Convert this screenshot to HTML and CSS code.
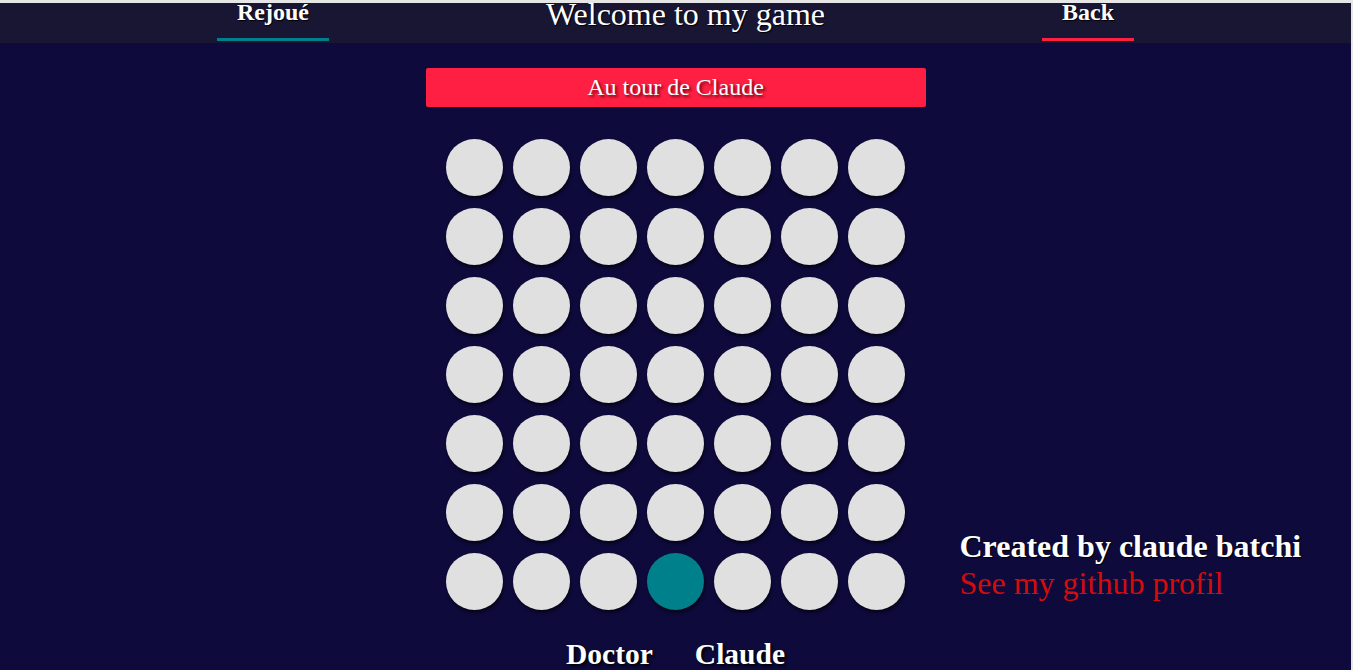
FILE: index.html
```html
<!DOCTYPE html>
<html lang="fr">
<head>
<meta charset="utf-8">
<title>Puissance 4</title>
<link rel="stylesheet" href="styles.css">
</head>
<body>
<div class="page">
  <header class="topbar">
    <a class="nav-item nav-replay">Rejoué</a>
    <h1 class="title">Welcome to my game</h1>
    <a class="nav-item nav-back">Back</a>
  </header>
  <main class="main">
    <div class="turn">Au tour de Claude</div>
    <div class="board-row">
      <div class="spacer"></div>
      <div class="board">
        <span class="cell"></span><span class="cell"></span><span class="cell"></span><span class="cell"></span><span class="cell"></span><span class="cell"></span><span class="cell"></span>
        <span class="cell"></span><span class="cell"></span><span class="cell"></span><span class="cell"></span><span class="cell"></span><span class="cell"></span><span class="cell"></span>
        <span class="cell"></span><span class="cell"></span><span class="cell"></span><span class="cell"></span><span class="cell"></span><span class="cell"></span><span class="cell"></span>
        <span class="cell"></span><span class="cell"></span><span class="cell"></span><span class="cell"></span><span class="cell"></span><span class="cell"></span><span class="cell"></span>
        <span class="cell"></span><span class="cell"></span><span class="cell"></span><span class="cell"></span><span class="cell"></span><span class="cell"></span><span class="cell"></span>
        <span class="cell"></span><span class="cell"></span><span class="cell"></span><span class="cell"></span><span class="cell"></span><span class="cell"></span><span class="cell"></span>
        <span class="cell"></span><span class="cell"></span><span class="cell"></span><span class="cell teal"></span><span class="cell"></span><span class="cell"></span><span class="cell"></span>
      </div>
      <aside class="credits">
        <div class="credit-name">Created by claude batchi</div>
        <a class="credit-link">See my github profil</a>
      </aside>
    </div>
    <div class="players">
      <span class="player">Doctor</span>
      <span class="player">Claude</span>
    </div>
  </main>
</div>
</body>
</html>
```
FILE: styles.css
```css
html, body {
  margin: 0;
  padding: 0;
}
body {
  background: #e6e6e6;
  height: 670px;
  overflow: hidden;
  font-family: "Liberation Serif", "Times New Roman", serif;
  color: #fff;
}
.page {
  margin-top: 3px;
  margin-right: 2px;
  background: #0e0a3c;
  min-height: 700px;
}
.topbar {
  height: 40px;
  background: #191633;
  display: flex;
  justify-content: space-evenly;
  align-items: flex-start;
}
.nav-item {
  font-size: 24px;
  font-weight: bold;
  line-height: 18px;
  padding: 0 20px 17px;
  border-bottom: 3px solid transparent;
  text-shadow: 1px 1px 1px #000;
  cursor: pointer;
}
.nav-replay { border-bottom-color: #00808a; }
.nav-back { border-bottom-color: #ff1f43; }
.title {
  margin: 0;
  font-size: 32px;
  font-weight: normal;
  line-height: 22px;
  text-shadow: 1px 1px 1px #000;
}
.main {
  display: flex;
  flex-direction: column;
  align-items: center;
  padding-top: 25px;
}
.turn {
  width: 500px;
  height: 39px;
  line-height: 39px;
  background: #ff1f43;
  border-radius: 2px;
  text-align: center;
  font-size: 24px;
  text-shadow: 2px 2px 3px #6a0010;
}
.board-row {
  align-self: stretch;
  display: grid;
  grid-template-columns: 1fr 500px 1fr;
  margin-top: 32px;
}
.board {
  grid-column: 2;
  justify-self: center;
  display: grid;
  grid-template-columns: repeat(7, 57px);
  column-gap: 10px;
  row-gap: 12px;
}
.cell {
  width: 57px;
  height: 57px;
  border-radius: 50%;
  background: #e0e0e0;
  box-shadow: 1px 3px 3px rgba(0, 0, 0, 0.55);
}
.cell.teal { background: #00808a; }
.credits {
  align-self: end;
  margin-bottom: 8px;
  padding-left: 34px;
  display: flex;
  flex-direction: column;
  font-size: 32px;
}
.credit-name {
  font-weight: bold;
  text-shadow: 1px 1px 1px #000;
}
.credit-link {
  color: #d40c0c;
  cursor: pointer;
}
.players {
  margin-top: 28px;
  display: flex;
  gap: 42px;
  font-size: 29.5px;
  font-weight: bold;
}
.player {
  text-shadow: 2px 2px 3px #000;
}
```
